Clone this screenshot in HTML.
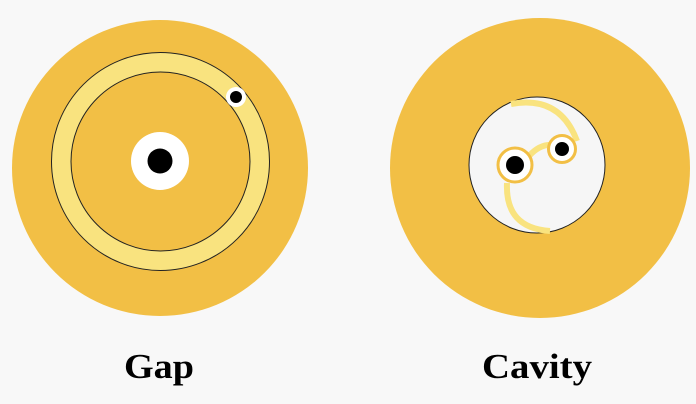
<!DOCTYPE html>
<html><head><style>html,body{margin:0;padding:0;background:#f8f8f8;}svg{display:block}</style></head>
<body>
<svg width="696" height="404" viewBox="0 0 696 404" xmlns="http://www.w3.org/2000/svg">
<rect width="696" height="404" fill="#f8f8f8"/>
<circle cx="160" cy="168" r="148" fill="#f2bf45"/>
<circle cx="160.5" cy="161.5" r="109" fill="#f9e37f" stroke="#222" stroke-width="1"/>
<circle cx="160.5" cy="161.5" r="89.5" fill="#f2bf45" stroke="#222" stroke-width="1"/>
<circle cx="160" cy="161" r="29" fill="#fff"/>
<circle cx="160" cy="161" r="12.5" fill="#000"/>
<circle cx="236" cy="97" r="10" fill="#fff"/>
<circle cx="236" cy="97" r="6" fill="#000"/>

<circle cx="540" cy="168" r="150" fill="#f2bf45"/>
<circle cx="537" cy="165" r="68" fill="#f6f6f6" stroke="#222" stroke-width="1"/>
<g fill="none" stroke="#f9e37f" stroke-width="6">
<path d="M511 104 Q560 95 577 141"/>
<path d="M507 183 Q505 228 550 231"/>
<path d="M529 156 Q540 144 552 145"/>
</g>
<circle cx="515" cy="165" r="17" fill="#fff" stroke="#f2bf45" stroke-width="3"/>
<circle cx="515" cy="165" r="9" fill="#000"/>
<circle cx="562" cy="149" r="13.5" fill="#fff" stroke="#f2bf45" stroke-width="3"/>
<circle cx="562" cy="149" r="7" fill="#000"/>

<g font-family="'Liberation Serif', serif" font-weight="bold" font-size="35" fill="#000">
<text x="124" y="378" textLength="70" lengthAdjust="spacingAndGlyphs">Gap</text>
<text x="482" y="378" textLength="110" lengthAdjust="spacingAndGlyphs">Cavity</text>
</g>
</svg>
</body></html>
